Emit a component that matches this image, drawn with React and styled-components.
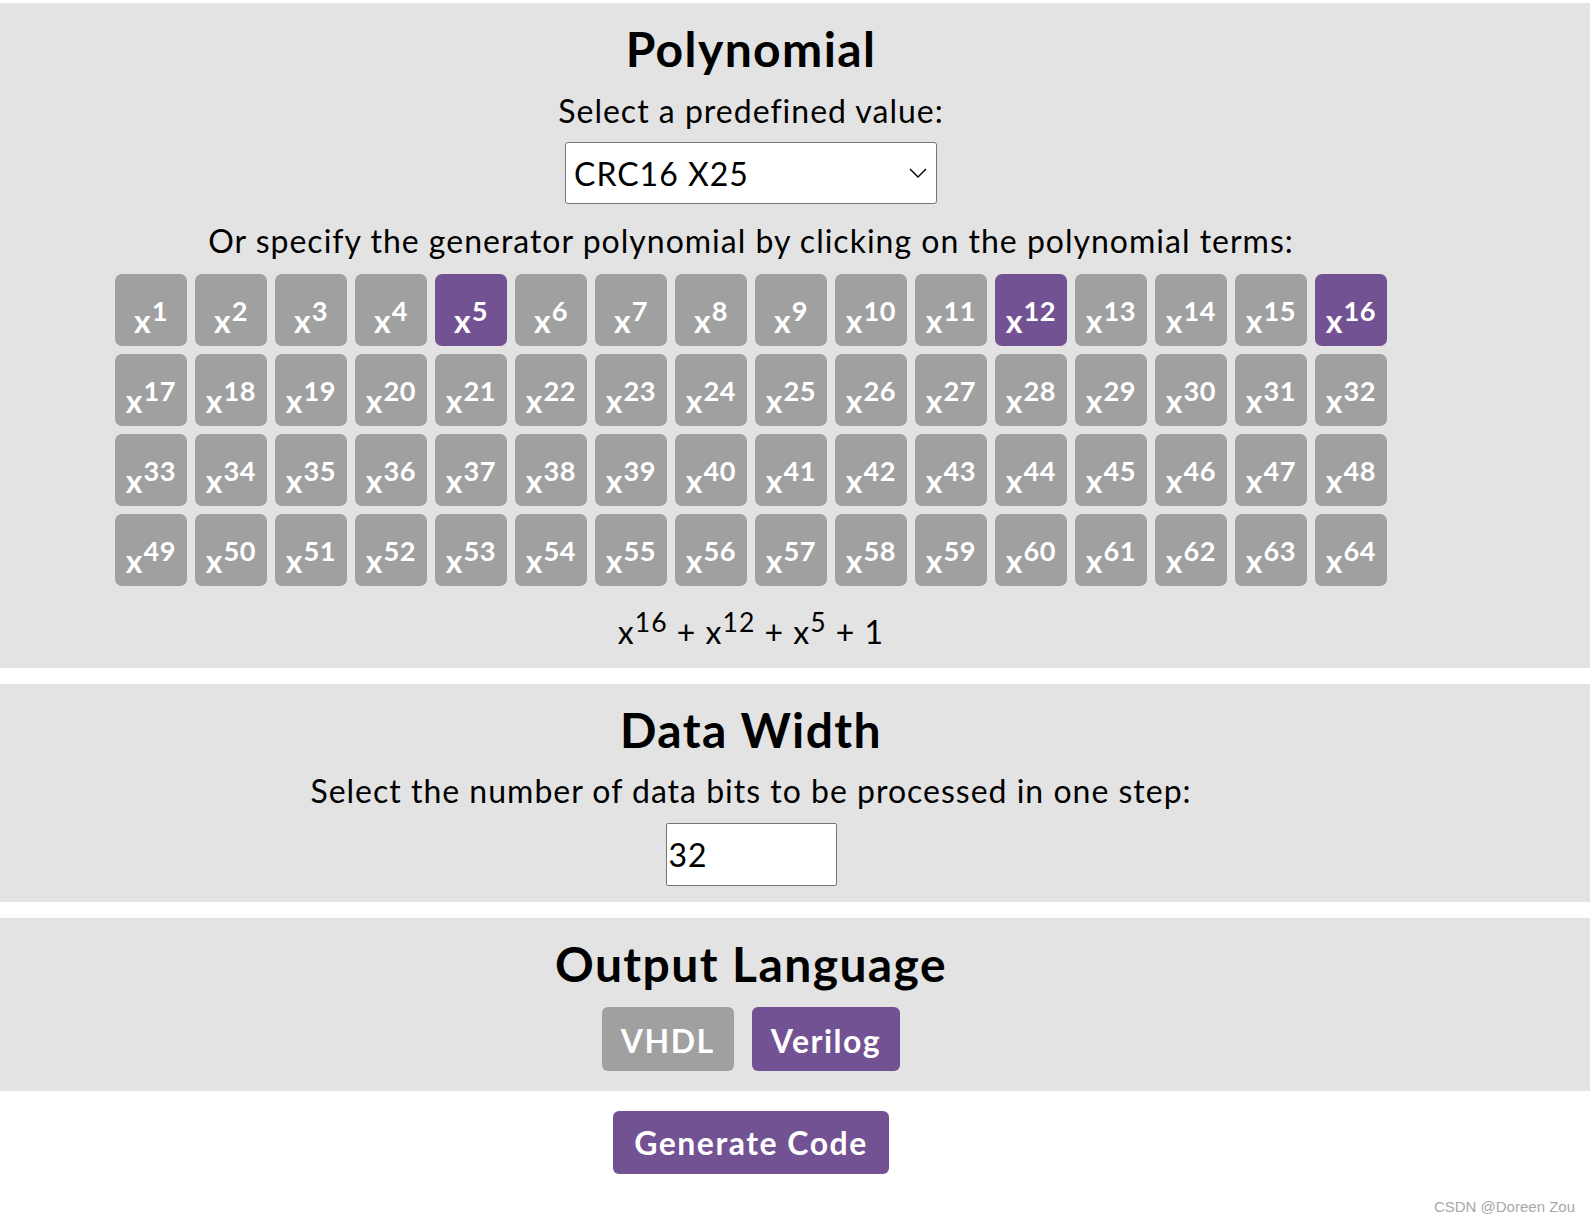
import React, { useState } from "react";
import styled, { createGlobalStyle } from "styled-components";

const GlobalStyle = createGlobalStyle`
  html, body {
    margin: 0;
    padding: 0;
    background: #ffffff;
  }
  body {
    font-family: Lato, "Noto Sans", sans-serif;
    color: #000000;
  }
`;

const PURPLE = "#735294";
const GRAY = "#a0a0a0";

// Page wrapper
const Page = styled.div`
  position: relative;
  width: 1590px;
  min-height: 1224px;
  padding-top: 3px;
  box-sizing: border-box;
`;

// Gray band that spans the full width
const Section = styled.section`
  background: #e3e3e3;
  padding: 17px 0 ${(p) => p.$bottom || 16}px;
  margin-bottom: ${(p) => (p.$last ? 0 : 16)}px;
`;

// Centered content column
const Inner = styled.div`
  width: 1502px;
  display: flex;
  flex-direction: column;
  align-items: center;
  text-align: center;
`;

const Title = styled.h2`
  margin: 0;
  font-size: 48px;
  line-height: 58px;
  font-weight: 700;
  letter-spacing: 1.4px;
`;

const Text = styled.p`
  margin: ${(p) => p.$top || 0}px 0 0;
  font-size: 32px;
  line-height: 40px;
  letter-spacing: 1px;
`;

const SelectWrap = styled.div`
  position: relative;
  margin-top: 11px;
  width: 372px;
  height: 62px;
`;

const Select = styled.select`
  appearance: none;
  width: 100%;
  height: 100%;
  box-sizing: border-box;
  border: 1px solid #767676;
  border-radius: 3px;
  background: #ffffff;
  font-family: Lato, "Noto Sans", sans-serif;
  font-size: 32px;
  letter-spacing: 1px;
  padding: 0 40px 0 8px;
  color: #000;
`;

const Chevron = styled.svg`
  position: absolute;
  right: 10px;
  top: 26px;
  pointer-events: none;
`;

const TermGrid = styled.div`
  margin-top: 13px;
  display: grid;
  grid-template-columns: repeat(16, 72px);
  grid-auto-rows: 72px;
  gap: 8px;
`;

const TermButton = styled.button`
  border: none;
  border-radius: 7px;
  background: ${(p) => (p.$active ? PURPLE : GRAY)};
  color: #ffffff;
  font-family: Lato, "Noto Sans", sans-serif;
  font-weight: 700;
  font-size: 32px;
  line-height: 40px;
  padding: 21px 0 0;
  box-sizing: border-box;
  cursor: pointer;
  white-space: nowrap;
  sup {
    font-size: 0.85em;
    line-height: 0;
    letter-spacing: 0.5px;
    margin-left: 1px;
  }
`;

const Expression = styled.div`
  margin-top: 26px;
  font-size: 32px;
  line-height: 40px;
  letter-spacing: 1px;
  sup {
    font-size: 0.83em;
    line-height: 0;
  }
`;

const NumberInput = styled.input`
  margin-top: 12px;
  width: 171px;
  height: 63px;
  box-sizing: border-box;
  border: 1px solid #767676;
  border-radius: 2px;
  padding: 0 2px;
  font-family: Lato, "Noto Sans", sans-serif;
  font-size: 32px;
  letter-spacing: 1px;
  background: #fff;
`;

const ButtonRow = styled.div`
  margin-top: 14px;
  display: flex;
  gap: 18px;
`;

const LangButton = styled.button`
  border: none;
  border-radius: 6px;
  height: 64px;
  padding: 2px 19px 0;
  background: ${(p) => (p.$active ? PURPLE : GRAY)};
  color: #ffffff;
  font-family: Lato, "Noto Sans", sans-serif;
  font-weight: 700;
  font-size: 32px;
  letter-spacing: 1.5px;
  cursor: pointer;
`;

const Footer = styled.div`
  width: 1502px;
  display: flex;
  justify-content: center;
  padding-top: 20px;
`;

const GenerateButton = styled(LangButton)`
  height: 63px;
  padding: 0 21px;
  background: ${PURPLE};
`;

const Watermark = styled.span`
  position: absolute;
  right: 15px;
  bottom: 9px;
  font-family: "Liberation Sans", Arial, sans-serif;
  font-size: 15px;
  color: #a8a8a8;
`;

const PRESETS = ["CRC16 X25", "CRC32", "CRC8", "CRC16 CCITT"];

function App() {
  const [terms, setTerms] = useState([16, 12, 5]);
  const [lang, setLang] = useState("Verilog");
  const [width, setWidth] = useState("32");

  const toggle = (n) =>
    setTerms((t) => (t.includes(n) ? t.filter((x) => x !== n) : [...t, n].sort((a, b) => b - a)));

  return (
    <Page>
      <GlobalStyle />
      <Section>
        <Inner>
          <Title>Polynomial</Title>
          <Text $top={13}>Select a predefined value:</Text>
          <SelectWrap>
            <Select defaultValue="CRC16 X25">
              {PRESETS.map((p) => (
                <option key={p}>{p}</option>
              ))}
            </Select>
            <Chevron width="18" height="10" viewBox="0 0 18 10">
              <polyline points="1,1 9,9 17,1" fill="none" stroke="#000" strokeWidth="1.4" />
            </Chevron>
          </SelectWrap>
          <Text $top={17}>Or specify the generator polynomial by clicking on the polynomial terms:</Text>
          <TermGrid>
            {Array.from({ length: 64 }, (_, i) => i + 1).map((n) => (
              <TermButton key={n} $active={terms.includes(n)} onClick={() => toggle(n)}>
                x<sup>{n}</sup>
              </TermButton>
            ))}
          </TermGrid>
          <Expression>
            {terms.map((n) => (
              <span key={n}>
                x<sup>{n}</sup> +{" "}
              </span>
            ))}
            1
          </Expression>
        </Inner>
      </Section>

      <Section>
        <Inner>
          <Title>Data Width</Title>
          <Text $top={12}>Select the number of data bits to be processed in one step:</Text>
          <NumberInput value={width} onChange={(e) => setWidth(e.target.value)} />
        </Inner>
      </Section>

      <Section $bottom={20} $last>
        <Inner>
          <Title>Output Language</Title>
          <ButtonRow>
            {["VHDL", "Verilog"].map((l) => (
              <LangButton key={l} $active={lang === l} onClick={() => setLang(l)}>
                {l}
              </LangButton>
            ))}
          </ButtonRow>
        </Inner>
      </Section>

      <Footer>
        <GenerateButton>Generate Code</GenerateButton>
      </Footer>

      <Watermark>CSDN @Doreen Zou</Watermark>
    </Page>
  );
}

export default App;
